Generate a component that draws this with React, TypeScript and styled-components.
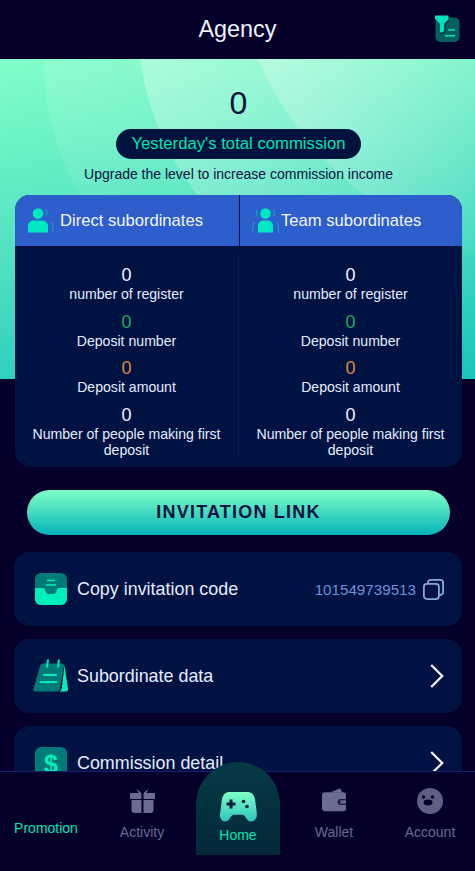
import React from "react";
import styled, { createGlobalStyle } from "styled-components";

const Global = createGlobalStyle`
  html, body { margin: 0; padding: 0; background: #04002a; }
  * { box-sizing: border-box; }
  body { font-family: "Liberation Sans", Arial, sans-serif; }
`;

const Page = styled.div`
  position: relative;
  width: 475px;
  height: 871px;
  overflow: hidden;
  background: #04002a;
  color: #e8f0ff;
`;

const Header = styled.header`
  height: 59px;
  display: flex;
  align-items: center;
  justify-content: center;
  background: #04002a;
  position: relative;
`;

const Title = styled.h1`
  margin: 0;
  font-size: 23.4px;
  font-weight: 400;
  color: #eef2ff;
`;

const HeaderIcon = styled.div`
  position: absolute;
  left: 434px;
  top: 15px;
  line-height: 0;
`;

const Top = styled.section`
  position: relative;
  padding: 25px 13px 0 15px;
  display: flex;
  flex-direction: column;
  align-items: center;
`;

const Backdrop = styled.div`
  position: absolute;
  left: 0;
  top: 0;
  width: 100%;
  height: 320px;
  overflow: hidden;
  background: linear-gradient(170deg, #82ffc8 0%, #1cc3bb 100%);
`;

const Arc = styled.div<{ $x: number; $y: number; $r: number; $a: number; $px: number; $fade: number }>`
  position: absolute;
  left: ${(p) => p.$x - p.$r}px;
  top: ${(p) => p.$y - p.$r}px;
  width: ${(p) => p.$r * 2}px;
  height: ${(p) => p.$r * 2}px;
  border-radius: 50%;
  background: radial-gradient(
    circle at ${(p) => p.$px - (p.$x - p.$r)}px ${(p) => p.$r - p.$y}px,
    rgba(255, 255, 255, ${(p) => p.$a}) 0,
    rgba(255, 255, 255, 0) ${(p) => p.$fade}px
  );
`;

const Amount = styled.div`
  position: relative;
  font-size: 32px;
  line-height: 38px;
  color: #04123f;
`;

const Pill = styled.div`
  position: relative;
  margin-top: 7px;
  width: 245px;
  height: 30px;
  border-radius: 15px;
  background: #00133f;
  color: #00e3b0;
  font-size: 16.7px;
  line-height: 30px;
  text-align: center;
`;

const Hint = styled.div`
  position: relative;
  margin-top: 7px;
  font-size: 14px;
  line-height: 16px;
  color: #04123f;
`;

const StatsCard = styled.div`
  position: relative;
  margin-top: 13px;
  width: 447px;
  border-radius: 15px;
  overflow: hidden;
  background: #001242;
`;

const StatsHead = styled.div`
  display: grid;
  grid-template-columns: 225px 222px;
  height: 51px;
  background: #2d5ecb;
`;

const HeadCell = styled.div<{ $divider?: boolean; $gap: number }>`
  display: flex;
  align-items: center;
  padding-left: 12px;
  gap: ${(p) => p.$gap}px;
  font-size: 16.6px;
  color: #f2f5ff;
  ${(p) => (p.$divider ? "border-right: 1px solid #04123f;" : "")}
`;

const StatsBody = styled.div`
  display: grid;
  grid-template-columns: 224px 223px;
  padding-top: 9px;
  height: 221px;
`;

const StatsColumn = styled.div<{ $divider?: boolean }>`
  display: flex;
  flex-direction: column;
  align-items: center;
  padding: 10px 8px 0;
  height: 203px;
  ${(p) => (p.$divider ? "border-right: 1px solid #04205a;" : "")}
`;

const Stat = styled.div`
  display: flex;
  flex-direction: column;
  align-items: center;
  height: 46.5px;
  text-align: center;
`;

const StatValue = styled.div<{ $color: string }>`
  font-size: 18px;
  line-height: 21px;
  color: ${(p) => p.$color};
`;

const StatLabel = styled.div`
  font-size: 14.1px;
  line-height: 16px;
  color: #e4ecff;
`;

const Main = styled.div`
  margin-top: 23px;
  padding: 0 13px 0 14px;
  display: flex;
  flex-direction: column;
`;

const InviteButton = styled.button`
  display: block;
  margin: 0 12px 0 13px;
  height: 45px;
  border: 0;
  border-radius: 23px;
  background: linear-gradient(180deg, #7fffc6 0%, #05b3b9 100%);
  color: #04123f;
  font-family: inherit;
  font-size: 18px;
  font-weight: 700;
  letter-spacing: 1.2px;
`;

const Rows = styled.div`
  margin-top: 17px;
  display: flex;
  flex-direction: column;
  gap: 13px;
`;

const Row = styled.div`
  height: 74px;
  border-radius: 15px;
  background: #001242;
  display: flex;
  align-items: center;
  padding: 0 18px 0 19px;
`;

const RowIcon = styled.div`
  width: 36px;
  margin-right: 8px;
  flex: none;
  display: flex;
  justify-content: center;
  line-height: 0;
`;

const RowText = styled.div`
  flex: 1;
  font-size: 17.9px;
  color: #e4ecff;
`;

const Code = styled.span`
  font-size: 15.2px;
  color: #6f8fdc;
  margin-right: 7px;
`;

const BottomNav = styled.nav`
  position: absolute;
  left: 0;
  top: 771px;
  width: 100%;
  height: 100px;
  background: #04002a;
  border-top: 1px solid #162070;
  display: flex;
  justify-content: space-between;
  padding: 0 7px 0 8px;
`;

const NavItem = styled.div<{ $active?: boolean; $offset?: number }>`
  width: 76px;
  display: flex;
  flex-direction: column;
  align-items: center;
  padding-top: ${(p) => p.$offset ?? 16}px;
  font-size: 14px;
  line-height: 16px;
  white-space: nowrap;
  color: ${(p) => (p.$active ? "#00e3b0" : "#666a8f")};
`;

const NavIcon = styled.div`
  height: 27px;
  margin-bottom: 9px;
  line-height: 0;
`;

const HomeTab = styled.div`
  flex: none;
  width: 84px;
  height: 93px;
  margin: -10px -4px 0;
  border-radius: 42px 42px 0 0;
  background: linear-gradient(180deg, #063a44 0%, #03283a 100%);
  display: flex;
  flex-direction: column;
  align-items: center;
  padding-top: 30px;
  font-size: 14px;
  line-height: 16px;
  color: #00e3b0;
`;

const HomeIcon = styled.div`
  height: 30px;
  margin-bottom: 5px;
  line-height: 0;
`;

const PersonIcon = () => (
  <svg width="27" height="25" viewBox="0 0 27 25" fill="none">
    <circle cx="11" cy="5.5" r="5.3" fill="#00e8c0" />
    <path d="M1 24.5v-6c0-4 2.500-6 6-6h8c3.500 0 6 2 6 6v6z" fill="#00e8c0" />
    <path d="M18.500 1.500c2 1.600 2 5.400 0 7" stroke="#1d97c9" strokeWidth="1.300" />
    <path d="M24 14c1.500 1.800 2.300 4.500 2 10.500" stroke="#1d97c9" strokeWidth="1.300" />
  </svg>
);

const TeamIcon = () => (
  <svg width="27" height="25" viewBox="0 0 27 25" fill="none">
    <circle cx="13.500" cy="5.500" r="5.300" fill="#00e8c0" />
    <path d="M6 24.500v-6.500c0-3.500 2.500-5.500 5.500-5.500h4c3 0 5.500 2 5.500 5.500v6.500z" fill="#00e8c0" />
    <path d="M21 1.500c2 1.600 2 5.400 0 7M6 1.500c-2 1.600-2 5.400 0 7" stroke="#1d97c9" strokeWidth="1.300" />
    <path d="M24.500 14c1.500 1.800 2 4.500 2 10.500M2.500 14C1 15.800.5 18.500.5 24.500" stroke="#1d97c9" strokeWidth="1.300" />
  </svg>
);

const FilterIcon = () => (
  <svg width="27" height="28" viewBox="0 0 27 28" fill="none">
    <rect x="1.500" y="2.500" width="24" height="24.500" rx="5" fill="#04605f" />
    <path d="M1 .5h13.500v3.500l-4.300 4.800v5.200c0 1.800-1 3.200-2.700 3.200H6V8.800L1 4z" fill="#00e3bc" />
    <path d="M6 18.800c3 0 5.300-1.300 5.300-4.500V9.200l4-4.200" stroke="#04304a" strokeWidth="1.200" />
    <path d="M14 15h7M11 20.700h10" stroke="#00e3bc" strokeWidth="1.400" />
  </svg>
);

const InboxIcon = () => (
  <svg width="32" height="32" viewBox="0 0 32 32">
    <rect width="32" height="32" rx="6" fill="#007a78" />
    <path d="M0 15h8c1.500 0 1.800.8 2.300 2.500.6 2 1.500 3.500 3 3.500h5.400c1.500 0 2.400-1.500 3-3.500.5-1.700.8-2.500 2.300-2.500h8v11a6 6 0 0 1-6 6H6a6 6 0 0 1-6-6z" fill="#00eebc" />
    <path d="M12 7.500h8M11 12h10" stroke="#00eebc" strokeWidth="1.600" fill="none" />
  </svg>
);

const NotepadIcon = () => (
  <svg width="36" height="34" viewBox="0 0 36 34">
    <path d="M10 4.500h19c1.500 0 2.300 1 2 2.500L27 29c-.3 2-1.500 3.500-3.500 3.500H3c-2 0-3-1.200-2.400-3.100L7 7c.5-1.500 1.500-2.500 3-2.500z" fill="#007a78" />
    <path d="M31.500 6 35 30c.2 1.500-.6 2.500-2 2.500h-7c1.500-.3 2.500-1.500 2.800-3.500z" fill="#00eebc" />
    <path d="M15 .5l-1 8M26 .5l-1 8" stroke="#00eebc" strokeWidth="2" />
    <path d="M11 16h12M8 23h15" stroke="#00eebc" strokeWidth="2.200" strokeLinecap="round" />
  </svg>
);

const DollarIcon = () => (
  <svg width="32" height="33" viewBox="0 0 32 33">
    <rect width="32" height="33" rx="6" fill="#007a78" />
    <text x="16" y="26" textAnchor="middle" fontFamily="Liberation Sans" fontSize="25" fontWeight="700" fill="#00eebc">$</text>
  </svg>
);

const CopyIcon = () => (
  <svg width="21" height="21" viewBox="0 0 21 21" fill="none" stroke="#8ea6e0" strokeWidth="1.800">
    <rect x=".9" y="4.800" width="15" height="15.300" rx="3" />
    <path d="M5 4.800V3.500C5 1.800 6 .9 7.800.9h9.400c1.800 0 2.900 1 2.900 2.800v9.200c0 2-1 3-4.300 3.200" />
  </svg>
);

const Chevron = () => (
  <svg width="14" height="24" viewBox="0 0 14 24" fill="none" stroke="#f2f5ff" strokeWidth="2.300">
    <path d="M1.200 1l11 11-11 11" />
  </svg>
);

const GiftIcon = () => (
  <svg width="25" height="25" viewBox="0 0 25 25" fill="#6a6c90">
    <rect x="0" y="5" width="11.500" height="6" rx="1" />
    <rect x="13.500" y="5" width="11.500" height="6" rx="1" />
    <path d="M1.500 12h10v13H4.500c-1.800 0-3-1.200-3-3zM13.500 12h10v10c0 1.800-1.200 3-3 3h-7z" />
    <path d="M6.500 1l5 4H8.500zM18.500 1l-5 4h3z" />
  </svg>
);

const WalletIcon = () => (
  <svg width="24" height="24" viewBox="0 0 24 24" fill="#6a6c90">
    <path d="M8 4.500 18 .3l2.300 4.200z" />
    <path d="M3 4.300h18.500c1.500 0 2.500 1 2.500 2.500v4.400h-6.500a3 3 0 0 0 0 5.600H24v4c0 1.500-1 2.500-2.500 2.500H3c-1.800 0-3-1.200-3-3V7.300c0-1.800 1.200-3 3-3z" />
    <path d="M18 12.200h6v3.600h-6a1.800 1.800 0 0 1 0-3.600z" />
    <circle cx="17.700" cy="14" r="1" fill="#04002a" />
  </svg>
);

const FaceIcon = () => (
  <svg width="26" height="26" viewBox="0 0 26 26">
    <circle cx="13" cy="13" r="13" fill="#5f5f82" />
    <circle cx="6.500" cy="9" r="1.700" fill="#04002a" />
    <circle cx="15.500" cy="9" r="1.700" fill="#04002a" />
    <ellipse cx="11" cy="14.500" rx="4.500" ry="3" fill="#04002a" />
  </svg>
);

const GameIcon = () => (
  <svg width="37" height="30" viewBox="0 0 37 30">
    <defs>
      <linearGradient id="game" x1="0" y1="0" x2="0" y2="1">
        <stop offset="0" stopColor="#7fffc6" />
        <stop offset="1" stopColor="#2cc5c0" />
      </linearGradient>
    </defs>
    <path d="M10 0h17c4.500 0 7 2.500 8 7l1.800 14c.5 5-2 8.500-5.500 8.500-2.800 0-4.500-2-6-4.500-1-1.700-2-2.200-3.500-2.200h-7.600c-1.500 0-2.500.5-3.500 2.200-1.500 2.500-3.200 4.500-6 4.500C1.700 29.500-.8 26 .2 21L2 7C3 2.500 5.500 0 10 0z" fill="url(#game)" />
    <path d="M9.500 7.500h3v3h3v3h-3v3h-3v-3h-3v-3h3z" fill="#04203a" />
    <circle cx="23.500" cy="9.500" r="1.800" fill="#04203a" />
    <circle cx="27" cy="14.500" r="1.800" fill="#04203a" />
  </svg>
);

const stats: { value: string; color: string; label: string }[] = [
  { value: "0", color: "#f0f4ff", label: "number of register" },
  { value: "0", color: "#18ab62", label: "Deposit number" },
  { value: "0", color: "#dd8a3e", label: "Deposit amount" },
  { value: "0", color: "#f0f4ff", label: "Number of people making first deposit" },
];

const StatList = () => (
  <>
    {stats.map((s) => (
      <Stat key={s.label}>
        <StatValue $color={s.color}>{s.value}</StatValue>
        <StatLabel>{s.label}</StatLabel>
      </Stat>
    ))}
  </>
);

export default function App() {
  return (
    <Page>
      <Global />
      <Header>
        <Title>Agency</Title>
        <HeaderIcon>
          <FilterIcon />
        </HeaderIcon>
      </Header>
      <Top>
        <Backdrop>
          <Arc $x={315} $y={1} $r={271} $a={0.12} $px={44} $fade={420} />
          <Arc $x={417} $y={-36} $r={279} $a={0.3} $px={140} $fade={420} />
          <Arc $x={582} $y={-144} $r={355} $a={0.28} $px={257} $fade={340} />
        </Backdrop>
        <Amount>0</Amount>
        <Pill>Yesterday's total commission</Pill>
        <Hint>Upgrade the level to increase commission income</Hint>
        <StatsCard>
          <StatsHead>
            <HeadCell $divider $gap={6}>
              <PersonIcon />
              Direct subordinates
            </HeadCell>
            <HeadCell $gap={2}>
              <TeamIcon />
              Team subordinates
            </HeadCell>
          </StatsHead>
          <StatsBody>
            <StatsColumn $divider>
              <StatList />
            </StatsColumn>
            <StatsColumn>
              <StatList />
            </StatsColumn>
          </StatsBody>
        </StatsCard>
      </Top>
      <Main>
        <InviteButton>INVITATION LINK</InviteButton>
        <Rows>
          <Row>
            <RowIcon>
              <InboxIcon />
            </RowIcon>
            <RowText>Copy invitation code</RowText>
            <Code>101549739513</Code>
            <CopyIcon />
          </Row>
          <Row>
            <RowIcon>
              <NotepadIcon />
            </RowIcon>
            <RowText>Subordinate data</RowText>
            <Chevron />
          </Row>
          <Row>
            <RowIcon>
              <DollarIcon />
            </RowIcon>
            <RowText>Commission detail</RowText>
            <Chevron />
          </Row>
        </Rows>
      </Main>
      <BottomNav>
        <NavItem $active $offset={48}>Promotion</NavItem>
        <NavItem>
          <NavIcon>
            <GiftIcon />
          </NavIcon>
          Activity
        </NavItem>
        <HomeTab>
          <HomeIcon>
            <GameIcon />
          </HomeIcon>
          Home
        </HomeTab>
        <NavItem>
          <NavIcon>
            <WalletIcon />
          </NavIcon>
          Wallet
        </NavItem>
        <NavItem>
          <NavIcon>
            <FaceIcon />
          </NavIcon>
          Account
        </NavItem>
      </BottomNav>
    </Page>
  );
}
